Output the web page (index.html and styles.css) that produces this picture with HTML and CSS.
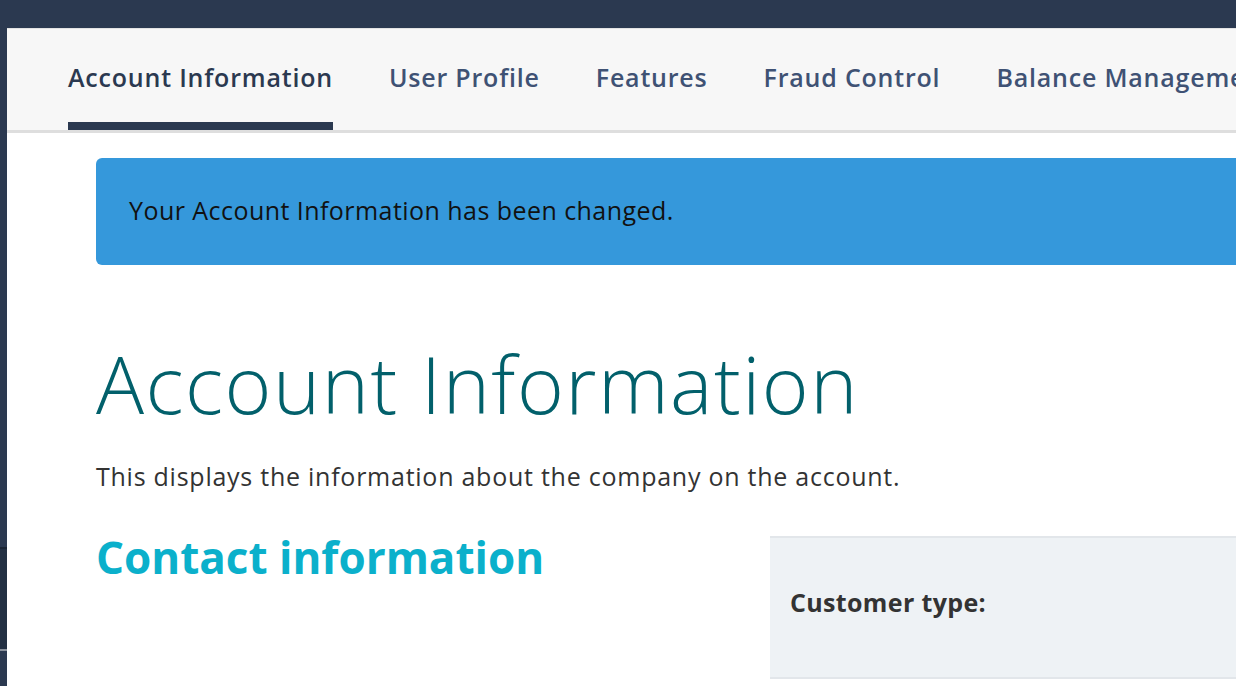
FILE: index.html
```html
<!DOCTYPE html>
<html lang="en">
<head>
  <meta charset="UTF-8">
  <meta name="viewport" content="width=device-width, initial-scale=1.0">
  <title>Account Information</title>
  <link rel="stylesheet" href="styles.css">
</head>
<body>
  <div class="topbar"></div>

  <div class="layout">
    <div class="side-strip">
      <div class="strip-mark"></div>
    </div>

    <div class="page">
      <nav class="tabs">
        <a href="#" class="tab active">Account Information</a>
        <a href="#" class="tab">User Profile</a>
        <a href="#" class="tab">Features</a>
        <a href="#" class="tab">Fraud Control</a>
        <a href="#" class="tab">Balance Management</a>
      </nav>

      <main class="content">
        <div class="alert">Your Account Information has been changed.</div>

        <h1>Account Information</h1>
        <p class="intro">This displays the information about the company on the account.</p>

        <div class="columns">
          <h2>Contact information</h2>
          <div class="info-panel">
            <div class="info-row">
              <strong>Customer type:</strong>
            </div>
          </div>
        </div>
      </main>
    </div>
  </div>
</body>
</html>
```

FILE: styles.css
```css
html, body {
  margin: 0;
  padding: 0;
  overflow: hidden;
}

body {
  font-family: "Open Sans", Lato, Arial, sans-serif;
  background-color: #ffffff;
  color: #333333;
}

.topbar {
  height: 28px;
  background-color: #2b3950;
}

.layout {
  display: flex;
  min-height: 658px;
}

.side-strip {
  width: 7px;
  flex-shrink: 0;
  background-color: #2b3950;
  display: flex;
  flex-direction: column;
  padding-top: 519px;
  box-sizing: border-box;
}

.strip-mark {
  height: 100px;
  background-color: #233043;
  border-top: 2px solid #1b2534;
  border-bottom: 2px solid #8a919c;
}

.page {
  flex: 1;
  min-width: 0;
}

.tabs {
  display: flex;
  gap: 56px;
  padding-left: 61px;
  background-color: #f7f7f7;
  border-top: 1px solid #e3e3e3;
  border-bottom: 3px solid #dedede;
  white-space: nowrap;
  overflow: hidden;
}

.tab {
  display: block;
  padding: 29px 0 25px;
  font-size: 25px;
  line-height: 39px;
  letter-spacing: 0.8px;
  font-weight: 600;
  color: #3f5274;
  text-decoration: none;
  border-bottom: 8px solid transparent;
}

.tab.active {
  color: #2b3950;
  border-bottom-color: #2b3950;
}

.content {
  padding-left: 89px;
  padding-top: 25px;
}

.alert {
  background-color: #3598db;
  color: #111111;
  border-radius: 6px 0 0 6px;
  padding: 36px 0 39px 33px;
  font-size: 25px;
  line-height: 32px;
  letter-spacing: 0.45px;
}

h1 {
  margin: 70px 0 0;
  font-size: 80px;
  line-height: 96px;
  letter-spacing: 1.5px;
  font-weight: 300;
  color: #02606b;
}

.intro {
  margin: 29px 0 0;
  font-size: 25px;
  line-height: 32px;
  letter-spacing: 0.75px;
  color: #333333;
}

.columns {
  display: grid;
  grid-template-columns: 674px 1fr;
  margin-top: 37px;
}

h2 {
  margin: 0;
  font-size: 44px;
  line-height: 56px;
  font-weight: 700;
  color: #0bb0cb;
}

.info-panel {
  background-color: #eef2f5;
  border-top: 2px solid #e2e6ea;
  border-bottom: 2px solid #e2e6ea;
  margin-top: 7px;
}

.info-row {
  padding: 48px 20px 59px;
  font-size: 25px;
  line-height: 32px;
  letter-spacing: 0.35px;
  color: #333333;
}
```
